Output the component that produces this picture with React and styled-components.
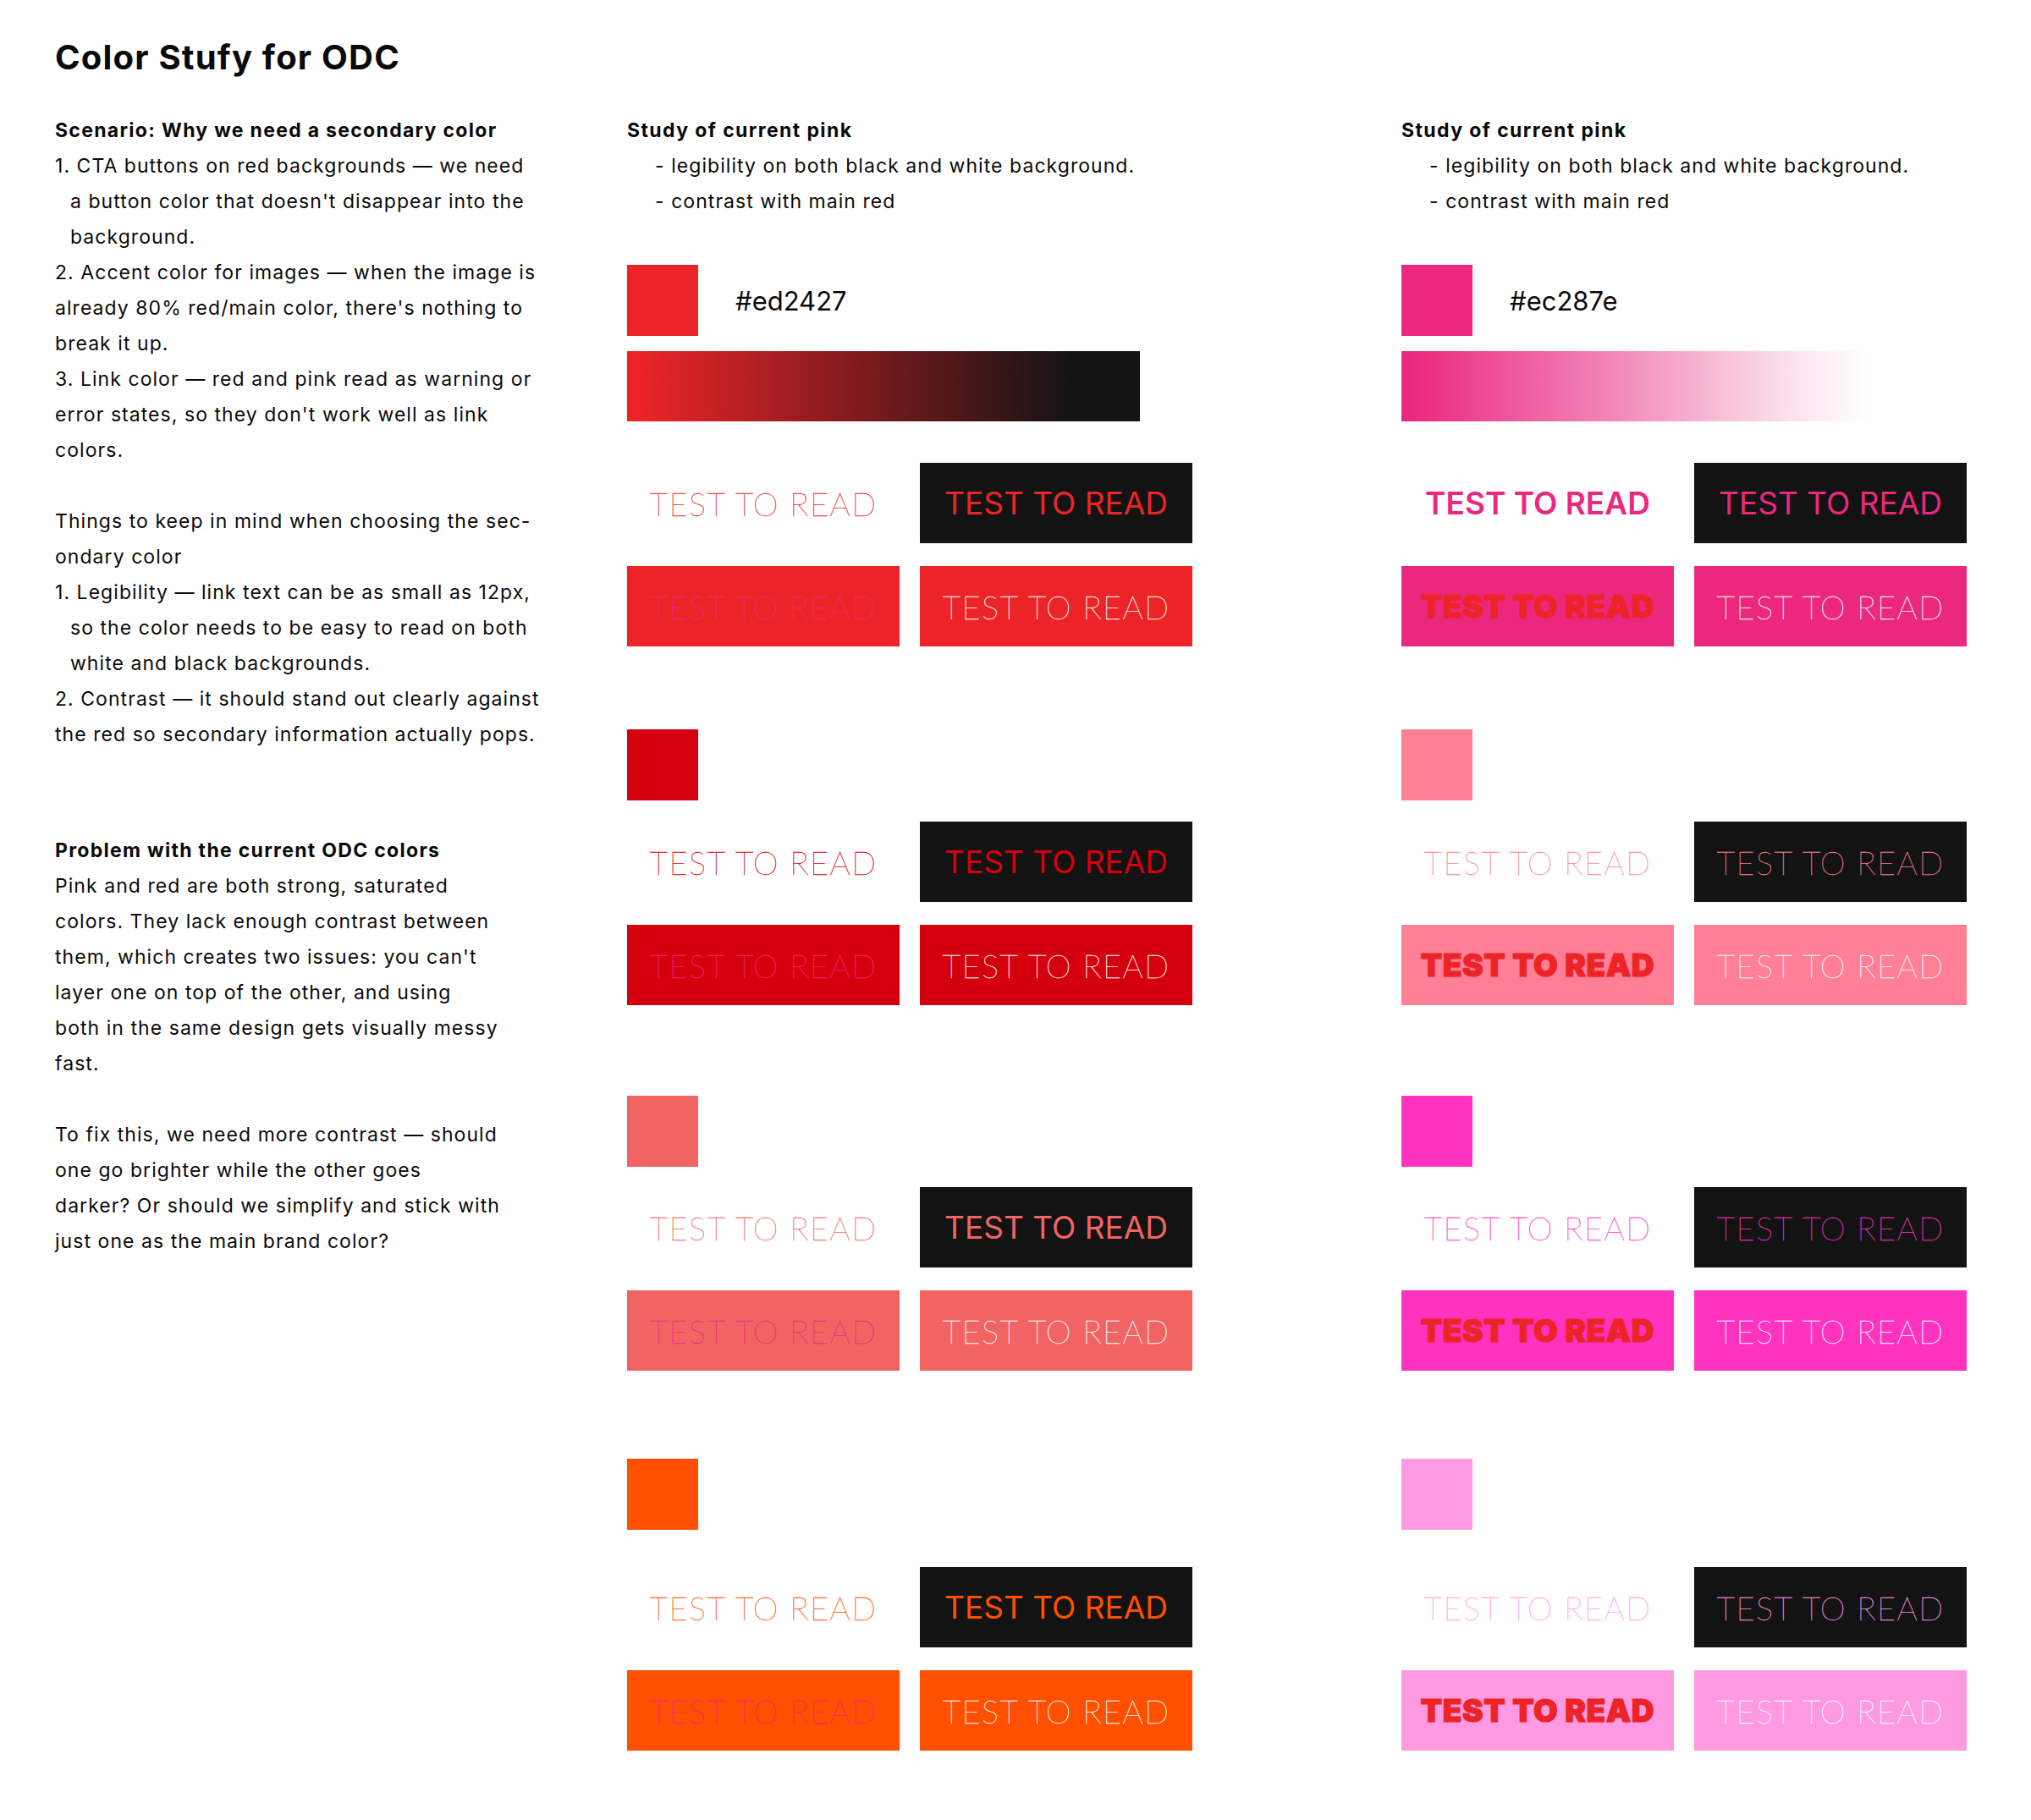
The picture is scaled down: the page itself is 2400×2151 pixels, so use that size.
import React from 'react'
import styled, { createGlobalStyle } from 'styled-components'

const GlobalStyle = createGlobalStyle`
  html, body {
    margin: 0;
    padding: 0;
    background: #fff;
  }
  body {
    font-family: Inter, "Open Sans", "Liberation Sans", sans-serif;
    color: #0a0a0a;
    -webkit-font-smoothing: antialiased;
  }
`

const scenario = [
    { text: '1. CTA buttons on red backgrounds — we need' },
    { text: "a button color that doesn't disappear into the", indent: true },
    { text: 'background.', indent: true },
    { text: '2. Accent color for images — when the image is' },
    { text: "already 80% red/main color, there's nothing to" },
    { text: 'break it up.' },
    { text: '3. Link color — red and pink read as warning or' },
    { text: "error states, so they don't work well as link" },
    { text: 'colors.' },
    { text: '' },
    { text: 'Things to keep in mind when choosing the sec-' },
    { text: 'ondary color' },
    { text: '1. Legibility — link text can be as small as 12px,' },
    { text: 'so the color needs to be easy to read on both', indent: true },
    { text: 'white and black backgrounds.', indent: true },
    { text: '2. Contrast — it should stand out clearly against' },
    { text: 'the red so secondary information actually pops.' },
]

const problem = [
    'Pink and red are both strong, saturated',
    'colors. They lack enough contrast between',
    "them, which creates two issues: you can't",
    'layer one on top of the other, and using',
    'both in the same design gets visually messy',
    'fast.',
    '',
    'To fix this, we need more contrast — should',
    'one go brighter while the other goes',
    'darker? Or should we simplify and stick with',
    'just one as the main brand color?',
]

// spacing of each swatch group, taken from the reference
const layout = [
    { top: 54, gridTop: 49, rowGap: 27 },
    { top: 98, gridTop: 25, rowGap: 27 },
    { top: 107, gridTop: 24, rowGap: 27 },
    { top: 104, gridTop: 44, rowGap: 27 },
]

const BLACK = '#131313'
const THIN = 200

const redGroups = ['#ed2427', '#d5000d', '#f26464', '#ff4f00'].map((c, i) => ({
    color: c,
    hex: i === 0 ? '#ed2427' : null,
    gradient: i === 0 ? 'linear-gradient(90deg, #ed2427 2%, #8c1b1f 40%, #131313 87%)' : null,
    buttons: [
        { bg: 'transparent', fg: c, weight: THIN },
        { bg: BLACK, fg: c, weight: 400 },
        { bg: c, fg: '#ec287e', weight: THIN },
        { bg: c, fg: '#fff', weight: THIN },
    ],
}))

const pinkGroups = ['#ec287e', '#ff7f96', '#ff33bf', '#ff99e1'].map((c, i) => ({
    color: c,
    hex: i === 0 ? '#ec287e' : null,
    gradient: i === 0 ? 'linear-gradient(90deg, #ec287e 2%, #f391bd 45%, #fbe0ec 75%, rgba(255,255,255,1) 91%)' : null,
    buttons: [
        { bg: 'transparent', fg: c, weight: i === 0 ? 600 : THIN },
        { bg: BLACK, fg: c, weight: i === 0 ? 400 : THIN },
        { bg: c, fg: '#ed2427', weight: 900 },
        { bg: c, fg: '#fff', weight: THIN },
    ],
}))

function StudyColumn({ groups }) {
    return (
        <Column>
            <Heading $spacing={1.4}>Study of current pink</Heading>
            <Bullet>- legibility on both black and white background.</Bullet>
            <Bullet>- contrast with main red</Bullet>

            {groups.map((g, i) => (
                <Group key={g.color} $top={layout[i].top}>
                    <SwatchRow>
                        <Swatch $color={g.color} />
                        {g.hex && <Hex>{g.hex}</Hex>}
                    </SwatchRow>
                    {g.gradient && <Gradient $bg={g.gradient} />}
                    <ButtonGrid $top={layout[i].gridTop} $rowGap={layout[i].rowGap}>
                        {g.buttons.map((b, j) => (
                            <Sample key={j} $bg={b.bg} $fg={b.fg} $weight={b.weight}>
                                TEST TO READ
                            </Sample>
                        ))}
                    </ButtonGrid>
                </Group>
            ))}
        </Column>
    )
}

export default function App() {
    return (
        <Page>
            <GlobalStyle />
            <Title>Color Stufy for ODC</Title>
            <Columns>
                <Notes>
                    <Heading>Scenario: Why we need a secondary color</Heading>
                    {scenario.map((l, i) => (
                        <Line key={i} $indent={l.indent}>{l.text || '\u00a0'}</Line>
                    ))}

                    <Heading $top={95}>Problem with the current ODC colors</Heading>
                    {problem.map((l, i) => (
                        <Line key={i}>{l || '\u00a0'}</Line>
                    ))}
                </Notes>

                <StudyColumn groups={redGroups} />
                <StudyColumn groups={pinkGroups} />
            </Columns>
        </Page>
    )
}

const Page = styled.div`
    min-height: 2151px;
    box-sizing: border-box;
    padding: 43px 0 0 65px;
`
const Title = styled.h1`
    margin: 0 0 40px;
    font-size: 40px;
    line-height: 50px;
    font-weight: 700;
    letter-spacing: 1.2px;
`
const Columns = styled.div`
    display: grid;
    grid-template-columns: 676px 915px 677px;
    align-items: start;
`
const Notes = styled.div`
    display: flex;
    flex-direction: column;
`
const Column = styled.div`
    display: flex;
    flex-direction: column;
`
const Heading = styled.div`
    margin-top: ${p => p.$top || 0}px;
    font-size: 23px;
    line-height: 42px;
    font-weight: 700;
    letter-spacing: ${p => p.$spacing || 1.3}px;
    white-space: nowrap;
`
const Line = styled.div`
    padding-left: ${p => p.$indent ? 18 : 0}px;
    font-size: 23px;
    line-height: 42px;
    font-weight: 400;
    letter-spacing: 1.05px;
    white-space: nowrap;
`
const Bullet = styled(Line)`
    padding-left: 33px;
`
const Group = styled.div`
    margin-top: ${p => p.$top}px;
    display: flex;
    flex-direction: column;
`
const SwatchRow = styled.div`
    display: flex;
    align-items: center;
    gap: 44px;
`
const Swatch = styled.div`
    width: 84px;
    height: 84px;
    background: ${p => p.$color};
`
const Hex = styled.span`
    font-size: 31px;
    font-weight: 400;
`
const Gradient = styled.div`
    margin-top: 18px;
    width: 606px;
    height: 83px;
    background: ${p => p.$bg};
`
const ButtonGrid = styled.div`
    margin-top: ${p => p.$top}px;
    display: grid;
    grid-template-columns: 322px 322px;
    column-gap: 24px;
    row-gap: ${p => p.$rowGap}px;
`
/* thin samples use Lato Thin with a hairline stroke, the heavier ones Inter */
const Sample = styled.div`
    height: 95px;
    display: flex;
    align-items: center;
    justify-content: center;
    background: ${p => p.$bg};
    color: ${p => p.$fg};
    font-family: ${p => p.$weight < 400 ? 'Lato, "Noto Sans", sans-serif' : 'Inter, "Noto Sans", sans-serif'};
    font-size: ${p => p.$weight < 400 ? 38 : 37}px;
    font-weight: ${p => p.$weight};
    letter-spacing: ${p => p.$weight < 400 ? 1.4 : p.$weight > 800 ? 0.6 : 0}px;
    -webkit-text-stroke: ${p => p.$weight < 400 ? 0.3 : p.$weight > 800 ? 1.2 : 0}px currentColor;
    white-space: nowrap;
`
